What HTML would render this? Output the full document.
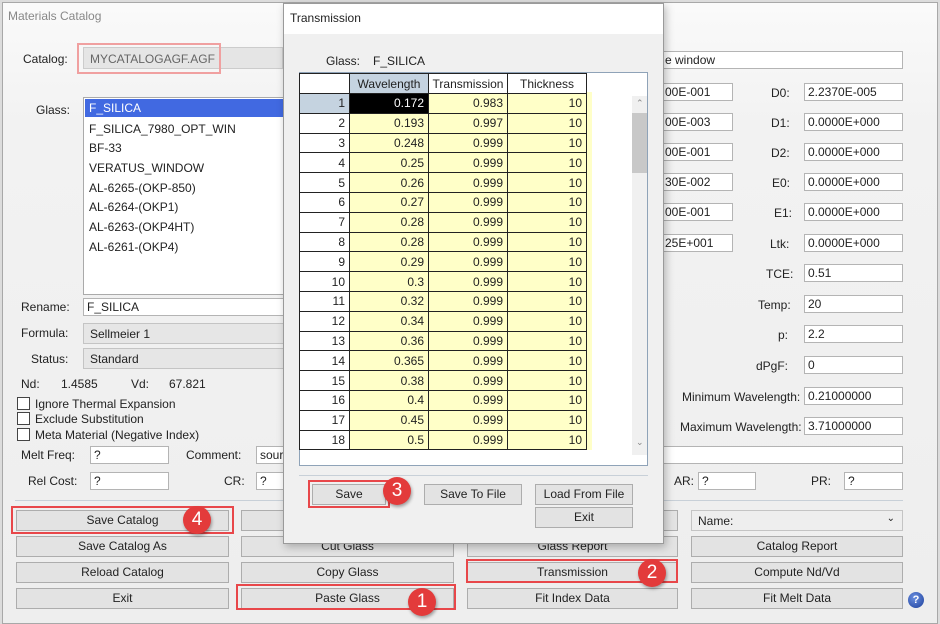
<!DOCTYPE html>
<html><head><meta charset="utf-8"><style>
*{box-sizing:border-box;margin:0;padding:0}
body{width:940px;height:624px;overflow:hidden;background:#dcdcdc;font-family:"Liberation Sans",sans-serif;font-size:12px;color:#222;position:relative}
.a{position:absolute}
#main{left:2px;top:2px;width:936px;height:622px;background:linear-gradient(#fafafa 0,#f2f2f2 120px,#eeeeee 100%);border:1px solid #a8a8a8}
.lbl{position:absolute;white-space:nowrap}
.inp{position:absolute;background:#fff;border:1px solid #b4b4b4;height:18px;padding:1px 3px;white-space:nowrap;overflow:hidden}
.btn{position:absolute;background:#e3e3e3;border:1px solid #adadad;height:21px;text-align:center;line-height:19px;white-space:nowrap}
.combo{position:absolute;background:#e6e6e6;border:1px solid #c4c4c4;height:21px;padding:3px 6px}
.red{position:absolute;border:2px solid #e8474a}
.badge{position:absolute;width:28px;height:28px;border-radius:50%;background:#e33b3b;color:#fff;font-size:19px;text-align:center;line-height:28px;box-shadow:1px 2px 3px rgba(0,0,0,.35)}
.cb{position:absolute;width:13px;height:13px;border:1px solid #444;background:#fff}
table{border-collapse:collapse;font-size:12px}
td{border:1px solid #222;height:19.8px;text-align:right;padding:0 4px 0 0;background:#ffffc8}
td.h{background:#fff}
th{border:1px solid #222;font-weight:normal;height:20px;background:#fff}
.pi{padding-left:20px}
</style></head><body>
<div id="main" class="a"></div>
<div class="lbl" style="left:8px;top:9px;color:#888;font-size:12px">Materials Catalog</div>

<div class="lbl" style="left:23px;top:52px">Catalog:</div>
<div class="a" style="left:83px;top:47px;width:200px;height:22px;background:#e5e5e5;border:1px solid #ccc;padding:4px 6px;color:#666">MYCATALOGAGF.AGF</div>
<div class="red" style="left:77px;top:43px;width:144px;height:31px;border-color:#f0a0a0"></div>

<div class="lbl" style="left:36px;top:103px">Glass:</div>
<div class="a" style="left:83px;top:97px;width:210px;height:198px;background:#fff;border:1px solid #aaa"></div>
<div class="a" style="left:85px;top:99px;width:200px;height:18px;background:#4169e1;color:#fff;padding:2px 4px">F_SILICA</div>
<div class="lbl" style="left:89px;top:122px">F_SILICA_7980_OPT_WIN</div>
<div class="lbl" style="left:89px;top:141px">BF-33</div>
<div class="lbl" style="left:89px;top:161px">VERATUS_WINDOW</div>
<div class="lbl" style="left:89px;top:181px">AL-6265-(OKP-850)</div>
<div class="lbl" style="left:89px;top:200px">AL-6264-(OKP1)</div>
<div class="lbl" style="left:89px;top:220px">AL-6263-(OKP4HT)</div>
<div class="lbl" style="left:89px;top:240px">AL-6261-(OKP4)</div>

<div class="lbl" style="left:21px;top:300px">Rename:</div>
<div class="inp" style="left:83px;top:298px;width:210px">F_SILICA</div>
<div class="lbl" style="left:21px;top:326px">Formula:</div>
<div class="combo" style="left:83px;top:323px;width:210px">Sellmeier 1</div>
<div class="lbl" style="left:31px;top:352px">Status:</div>
<div class="combo" style="left:83px;top:348px;width:210px">Standard</div>
<div class="lbl" style="left:21px;top:377px">Nd:</div>
<div class="lbl" style="left:61px;top:377px">1.4585</div>
<div class="lbl" style="left:131px;top:377px">Vd:</div>
<div class="lbl" style="left:169px;top:377px">67.821</div>
<div class="cb" style="left:17px;top:397px"></div><div class="lbl" style="left:35px;top:397px">Ignore Thermal Expansion</div>
<div class="cb" style="left:17px;top:412px"></div><div class="lbl" style="left:35px;top:412px">Exclude Substitution</div>
<div class="cb" style="left:17px;top:428px"></div><div class="lbl" style="left:35px;top:428px">Meta Material (Negative Index)</div>
<div class="lbl" style="left:21px;top:448px">Melt Freq:</div>
<div class="inp" style="left:90px;top:446px;width:79px">?</div>
<div class="lbl" style="left:186px;top:448px">Comment:</div>
<div class="inp" style="left:256px;top:446px;width:647px">source window</div>
<div class="lbl" style="left:28px;top:474px">Rel Cost:</div>
<div class="inp" style="left:90px;top:472px;width:79px">?</div>
<div class="lbl" style="left:224px;top:474px">CR:</div>
<div class="inp" style="left:256px;top:472px;width:60px">?</div>
<div class="lbl" style="left:674px;top:474px">AR:</div>
<div class="inp" style="left:698px;top:472px;width:58px">?</div>
<div class="lbl" style="left:811px;top:474px">PR:</div>
<div class="inp" style="left:844px;top:472px;width:59px">?</div>
<div class="a" style="left:15px;top:500px;width:888px;height:1px;background:#c8d0d8"></div>

<div class="inp pi" style="left:644px;top:51px;width:259px">e window</div>
<div class="inp pi" style="left:644px;top:83px;width:89px">00E-001</div>
<div class="inp pi" style="left:644px;top:113px;width:89px">00E-003</div>
<div class="inp pi" style="left:644px;top:143px;width:89px">00E-001</div>
<div class="inp pi" style="left:644px;top:173px;width:89px">30E-002</div>
<div class="inp pi" style="left:644px;top:203px;width:89px">00E-001</div>
<div class="inp pi" style="left:644px;top:234px;width:89px">25E+001</div>
<div class="lbl" style="left:771px;top:86px">D0:</div><div class="inp" style="left:804px;top:83px;width:99px">2.2370E-005</div>
<div class="lbl" style="left:771px;top:116px">D1:</div><div class="inp" style="left:804px;top:113px;width:99px">0.0000E+000</div>
<div class="lbl" style="left:771px;top:146px">D2:</div><div class="inp" style="left:804px;top:143px;width:99px">0.0000E+000</div>
<div class="lbl" style="left:772px;top:176px">E0:</div><div class="inp" style="left:804px;top:173px;width:99px">0.0000E+000</div>
<div class="lbl" style="left:774px;top:206px">E1:</div><div class="inp" style="left:804px;top:203px;width:99px">0.0000E+000</div>
<div class="lbl" style="left:770px;top:237px">Ltk:</div><div class="inp" style="left:804px;top:234px;width:99px">0.0000E+000</div>
<div class="lbl" style="left:766px;top:267px">TCE:</div><div class="inp" style="left:804px;top:264px;width:99px">0.51</div>
<div class="lbl" style="left:758px;top:298px">Temp:</div><div class="inp" style="left:804px;top:295px;width:99px">20</div>
<div class="lbl" style="left:778px;top:328px">p:</div><div class="inp" style="left:804px;top:325px;width:99px">2.2</div>
<div class="lbl" style="left:756px;top:359px">dPgF:</div><div class="inp" style="left:804px;top:356px;width:99px">0</div>
<div class="lbl" style="left:682px;top:390px">Minimum Wavelength:</div><div class="inp" style="left:804px;top:387px;width:99px">0.21000000</div>
<div class="lbl" style="left:680px;top:420px">Maximum Wavelength:</div><div class="inp" style="left:804px;top:417px;width:99px">3.71000000</div>

<div class="btn" style="left:16px;top:510px;width:213px">Save Catalog</div>
<div class="btn" style="left:16px;top:536px;width:213px">Save Catalog As</div>
<div class="btn" style="left:16px;top:562px;width:213px">Reload Catalog</div>
<div class="btn" style="left:16px;top:588px;width:213px">Exit</div>
<div class="btn" style="left:241px;top:510px;width:213px"></div>
<div class="btn" style="left:241px;top:536px;width:213px">Cut Glass</div>
<div class="btn" style="left:241px;top:562px;width:213px">Copy Glass</div>
<div class="btn" style="left:241px;top:588px;width:213px">Paste Glass</div>
<div class="btn" style="left:467px;top:510px;width:211px"></div>
<div class="btn" style="left:467px;top:536px;width:211px">Glass Report</div>
<div class="btn" style="left:467px;top:562px;width:211px">Transmission</div>
<div class="btn" style="left:467px;top:588px;width:211px">Fit Index Data</div>
<div class="combo" style="left:691px;top:510px;width:212px;background:#eee">Name:<span style="position:absolute;right:7px;top:2px;font-size:10px">&#8964;</span></div>
<div class="btn" style="left:691px;top:536px;width:212px">Catalog Report</div>
<div class="btn" style="left:691px;top:562px;width:212px">Compute Nd/Vd</div>
<div class="btn" style="left:691px;top:588px;width:212px">Fit Melt Data</div>
<div class="a" style="left:908px;top:592px;width:16px;height:16px;border-radius:50%;background:radial-gradient(circle at 40% 35%,#6a8fe0,#1d3f9a);color:#fff;font-size:11px;font-weight:bold;text-align:center;line-height:16px">?</div>

<!-- dialog -->
<div class="a" style="left:283px;top:3px;width:381px;height:541px;background:#f0f0f0;border:1px solid #9a9a9a;box-shadow:2px 3px 8px rgba(0,0,0,.25)"></div>
<div class="a" style="left:284px;top:4px;width:379px;height:30px;background:#fff"></div>
<div class="lbl" style="left:290px;top:11px">Transmission</div>
<div class="lbl" style="left:326px;top:54px">Glass:</div>
<div class="lbl" style="left:373px;top:54px">F_SILICA</div>
<div class="a" style="left:299px;top:72px;width:349px;height:394px;background:#fff;border:1px solid #8fa3b8"></div>
<div class="a" style="left:586px;top:92px;width:6px;height:358px;background:#ffffc8"></div>
<div class="a" style="left:632px;top:96px;width:15px;height:359px;background:#f0f0f0"></div>
<div class="a" style="left:632px;top:113px;width:15px;height:60px;background:#c8c8c8"></div>
<div class="lbl" style="left:636px;top:98px;font-size:9px;color:#888">&#8963;</div>
<div class="lbl" style="left:636px;top:437px;font-size:9px;color:#888">&#8964;</div>
<table class="a" style="left:299px;top:73px">
<tr><th style="width:50px"></th><th style="width:79px;background:#c5d3e0">Wavelength</th><th style="width:79px">Transmission</th><th style="width:79px">Thickness</th></tr>
<tr><td class="h" style="background:#c5d3e0">1</td><td style="background:#000;color:#fff">0.172</td><td>0.983</td><td>10</td></tr>
<tr><td class="h">2</td><td>0.193</td><td>0.997</td><td>10</td></tr>
<tr><td class="h">3</td><td>0.248</td><td>0.999</td><td>10</td></tr>
<tr><td class="h">4</td><td>0.25</td><td>0.999</td><td>10</td></tr>
<tr><td class="h">5</td><td>0.26</td><td>0.999</td><td>10</td></tr>
<tr><td class="h">6</td><td>0.27</td><td>0.999</td><td>10</td></tr>
<tr><td class="h">7</td><td>0.28</td><td>0.999</td><td>10</td></tr>
<tr><td class="h">8</td><td>0.28</td><td>0.999</td><td>10</td></tr>
<tr><td class="h">9</td><td>0.29</td><td>0.999</td><td>10</td></tr>
<tr><td class="h">10</td><td>0.3</td><td>0.999</td><td>10</td></tr>
<tr><td class="h">11</td><td>0.32</td><td>0.999</td><td>10</td></tr>
<tr><td class="h">12</td><td>0.34</td><td>0.999</td><td>10</td></tr>
<tr><td class="h">13</td><td>0.36</td><td>0.999</td><td>10</td></tr>
<tr><td class="h">14</td><td>0.365</td><td>0.999</td><td>10</td></tr>
<tr><td class="h">15</td><td>0.38</td><td>0.999</td><td>10</td></tr>
<tr><td class="h">16</td><td>0.4</td><td>0.999</td><td>10</td></tr>
<tr><td class="h">17</td><td>0.45</td><td>0.999</td><td>10</td></tr>
<tr><td class="h">18</td><td>0.5</td><td>0.999</td><td>10</td></tr>
</table>
<div class="a" style="left:299px;top:475px;width:349px;height:1px;background:#c8d0d8"></div>
<div class="btn" style="left:312px;top:484px;width:74px">Save</div>
<div class="btn" style="left:424px;top:484px;width:98px">Save To File</div>
<div class="btn" style="left:535px;top:484px;width:98px">Load From File</div>
<div class="btn" style="left:535px;top:507px;width:98px">Exit</div>

<div class="red" style="left:11px;top:506px;width:223px;height:28px"></div>
<div class="red" style="left:236px;top:584px;width:220px;height:26px"></div>
<div class="red" style="left:466px;top:559px;width:212px;height:24px"></div>
<div class="red" style="left:308px;top:480px;width:82px;height:28px"></div>
<div class="badge" style="left:408px;top:588px">1</div>
<div class="badge" style="left:638px;top:559px">2</div>
<div class="badge" style="left:383px;top:477px">3</div>
<div class="badge" style="left:183px;top:506px">4</div>
</body></html>
